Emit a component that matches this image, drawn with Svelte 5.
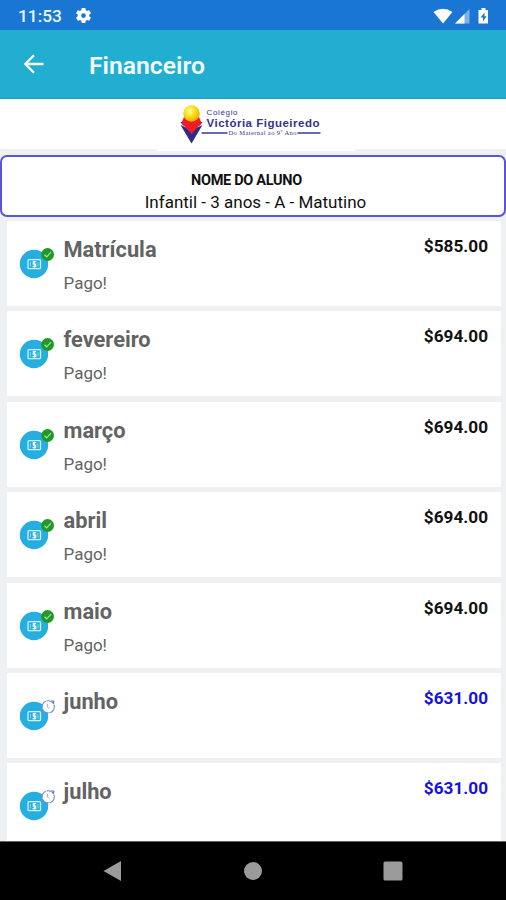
<script lang="ts">
  type Parcela = {
    mes: string;
    valor: string;
    pago: boolean;
  };

  let parcelas: Parcela[] = [
    { mes: "Matrícula", valor: "$585.00", pago: true },
    { mes: "fevereiro", valor: "$694.00", pago: true },
    { mes: "março", valor: "$694.00", pago: true },
    { mes: "abril", valor: "$694.00", pago: true },
    { mes: "maio", valor: "$694.00", pago: true },
    { mes: "junho", valor: "$631.00", pago: false },
    { mes: "julho", valor: "$631.00", pago: false },
  ];
</script>

<div class="screen">
  <div class="statusbar">
    <span class="time">11:53</span>
    <svg class="gear" viewBox="0 0 24 24" width="19" height="19">
      <path
        fill="#fff"
        d="M19.14 12.94c.04-.3.06-.61.06-.94 0-.32-.02-.64-.07-.94l2.03-1.58c.18-.14.23-.41.12-.61l-1.92-3.32c-.12-.22-.37-.29-.59-.22l-2.39.96c-.5-.38-1.03-.7-1.62-.94l-.36-2.54c-.04-.24-.24-.41-.48-.41h-3.84c-.24 0-.43.17-.47.41l-.36 2.54c-.59.24-1.13.57-1.62.94l-2.39-.96c-.22-.08-.47 0-.59.22L2.74 8.87c-.12.21-.08.47.12.61l2.03 1.58c-.05.3-.09.63-.09.94s.02.64.07.94l-2.03 1.58c-.18.14-.23.41-.12.61l1.92 3.32c.12.22.37.29.59.22l2.39-.96c.5.38 1.03.7 1.62.94l.36 2.54c.05.24.24.41.48.41h3.84c.24 0 .44-.17.47-.41l.36-2.54c.59-.24 1.13-.56 1.62-.94l2.39.96c.22.08.47 0 .59-.22l1.92-3.32c.12-.22.07-.47-.12-.61l-2.01-1.58zM12 15a3 3 0 1 1 0-6 3 3 0 0 1 0 6z"
      />
    </svg>
    <svg class="signals" viewBox="0 0 58 18" width="58" height="18">
      <path fill="#fff" d="M0.500 5 Q10 -1.500 19.500 5 L10 16.500 Z" />
      <path fill="#7fb0e6" d="M22 16.500 L36.500 2 V16.500 Z" />
      <path fill="#fff" d="M22 16.500 L31.500 7 V16.500 Z" />
      <path fill="#fff" d="M48.500 1 h4 v2 h2.500 v13.500 h-9.500 V3 h3 z" />
      <path fill="#1976d2" d="M51.500 5.500 L47.500 10.500 H50 V14.500 L53.500 9.300 H51.500 Z" />
    </svg>
  </div>

  <header>
    <svg class="back" viewBox="0 0 20 20" width="20" height="20">
      <path
        d="M19.500 10 H1.500 M10 1.200 L1.300 10 L10 18.800"
        fill="none"
        stroke="#fff"
        stroke-width="2.300"
      />
    </svg>
    <h1>Financeiro</h1>
  </header>

  <div class="logo">
    <svg viewBox="0 0 198 46" width="198" height="46">
      <defs>
        <radialGradient id="sol" cx="0.4" cy="0.35" r="0.65">
          <stop offset="0" stop-color="#fffbb0" />
          <stop offset="0.45" stop-color="#fde51a" />
          <stop offset="1" stop-color="#f0a800" />
        </radialGradient>
      </defs>
      <g transform="translate(20.500 0)">
        <path fill="#2d2c86" d="M3 20 L14 25 L25 20 L14 38.500 Z" />
        <path fill="#2d2c86" d="M3 17 h5 l-2 4 z M25 17 h-5 l2 4 z" />
        <path fill="#ee1c25" d="M6.500 12 L21.500 12 L24 18 L14 29 L4 18 Z" />
        <circle cx="14" cy="8.500" r="8.300" fill="url(#sol)" />
        <text class="colegio" x="29" y="9.500" textLength="31">Colégio</text>
        <text class="victoria" x="29" y="22" textLength="113">Victória Figueiredo</text>
        <path stroke="#3a3990" stroke-width="1.300" d="M24 28 H50 M120 28 H143" />
        <text class="maternal" x="51" y="30.300" textLength="68">Do Maternal ao 9º Ano</text>
      </g>
    </svg>
  </div>

  <div class="aluno">
    <b>NOME DO ALUNO</b>
    <span>Infantil - 3 anos - A - Matutino</span>
  </div>

  <main>
    {#each parcelas as parcela}
      <div class="card">
        <svg class="icone" viewBox="0 0 36 32" width="36" height="32">
          <circle cx="15" cy="17" r="14.200" fill="#27aee0" />
          <rect
            x="9"
            y="12.700"
            width="12.500"
            height="9"
            rx="1"
            fill="none"
            stroke="#d4effa"
            stroke-width="1.300"
          />
          <path
            d="M17.200 14.700 H14.300 V17.100 H16.700 V19.700 H13.500 M15.400 13.700 V20.700"
            fill="none"
            stroke="#e6f7fd"
            stroke-width="1.200"
          />
          <path d="M11.500 15 V19.500 M19 15 V19.500" stroke="#8fd6f0" stroke-width="0.900" />
          {#if parcela.pago}
            <circle cx="28.600" cy="7.500" r="6.400" fill="#1f9a24" />
            <path
              d="M25.500 7.700 L27.700 9.800 L32 5.200"
              fill="none"
              stroke="#a9dcab"
              stroke-width="1.200"
            />
          {:else}
            <circle
              cx="29.200"
              cy="7.800"
              r="6.100"
              fill="#fff"
              stroke="#7186d8"
              stroke-width="1.100"
              stroke-dasharray="8 0.800"
            />
            <path
              d="M32.500 1.800 L35 2.200 L34.300 4.600"
              fill="none"
              stroke="#4961d2"
              stroke-width="1"
            />
            <path
              d="M28.500 4.800 V8.300 L30.300 9.200"
              fill="none"
              stroke="#a9acc9"
              stroke-width="0.900"
            />
          {/if}
        </svg>
        <div class="texto">
          <h2>{parcela.mes}</h2>
          {#if parcela.pago}
            <p>Pago!</p>
          {/if}
        </div>
        <div class="valor" class:aberto={!parcela.pago}>{parcela.valor}</div>
      </div>
    {/each}
  </main>

  <footer>
    <svg viewBox="0 0 20 22" width="20" height="22">
      <path fill="#9b9b9b" d="M0.500 11 L18 1 V21 Z" />
    </svg>
    <svg viewBox="0 0 20 20" width="20" height="20">
      <circle cx="10" cy="10" r="9" fill="#9b9b9b" />
    </svg>
    <svg viewBox="0 0 20 20" width="20" height="20">
      <rect x="0.500" y="0.500" width="19" height="19" rx="1.500" fill="#9b9b9b" />
    </svg>
  </footer>
</div>

<style>
  :global(body) {
    margin: 0;
  }
  .screen {
    width: 506px;
    height: 900px;
    display: flex;
    flex-direction: column;
    overflow: hidden;
    background-color: #eef0f1;
    font-family: Roboto, sans-serif;
  }
  h1,
  h2,
  p {
    margin: 0;
  }

  /* status bar */
  .statusbar {
    height: 30px;
    flex: none;
    display: flex;
    align-items: center;
    box-sizing: border-box;
    padding: 1px 15px 0 18px;
    background-color: #1976d2;
  }
  .time {
    width: 56px;
    color: #eef6ff;
    font-size: 17.3px;
    font-weight: 500;
    line-height: 30px;
  }
  .signals {
    margin-left: auto;
  }

  /* header */
  header {
    height: 69px;
    flex: none;
    display: flex;
    align-items: center;
    box-sizing: border-box;
    padding: 2px 0 0 24px;
    background-color: #21aed1;
    border-bottom: 1px solid #1aa2c6;
  }
  .back {
    margin-top: -3px;
  }
  h1 {
    margin-left: 45px;
    color: #f2fcff;
    font-size: 24.7px;
    font-weight: 600;
  }

  /* logo */
  .logo {
    height: 50px;
    flex: none;
    display: flex;
    justify-content: center;
    box-sizing: border-box;
    padding: 6px 0 0 6px;
    background-color: #fff;
  }
  .logo svg {
    flex: none;
    background-color: #fff;
  }
  .logo text {
    fill: #35348c;
    font-family: "Liberation Sans", Arial, sans-serif;
  }
  .logo .colegio {
    font-size: 8px;
  }
  .logo .victoria {
    font-size: 11.5px;
    font-weight: 700;
  }
  .logo .maternal {
    font-family: "Liberation Serif", serif;
    font-size: 6.5px;
  }

  /* aluno */
  .aluno {
    height: 62px;
    flex: none;
    display: flex;
    flex-direction: column;
    align-items: center;
    box-sizing: border-box;
    margin-top: 6px;
    padding-top: 13px;
    background-color: #fff;
    border: 2px solid #5a54d6;
    border-radius: 7px;
    color: #111;
    line-height: 21.5px;
  }
  .aluno b {
    margin-right: 13px;
    font-size: 14.5px;
    letter-spacing: -0.3px;
  }
  .aluno span {
    margin-left: 5px;
    font-size: 17px;
  }

  /* parcelas */
  main {
    flex: 1;
    min-height: 0;
    display: flex;
    flex-direction: column;
    gap: 5.4px;
    overflow: hidden;
    padding: 4px 5px 0 7px;
  }
  .card {
    height: 85px;
    flex: none;
    display: flex;
    box-sizing: border-box;
    padding: 14px 13px 0 12px;
    background-color: #fff;
  }
  .icone {
    margin-top: 12px;
  }
  .texto {
    flex: 1;
    margin-left: 8.5px;
    color: #636363;
  }
  h2 {
    margin-top: 1px;
    font-size: 21.8px;
    font-weight: 700;
    line-height: 28px;
  }
  p {
    margin-top: 7px;
    font-size: 17px;
    line-height: 24px;
  }
  .valor {
    color: #111;
    font-size: 17.2px;
    font-weight: 700;
    line-height: 22px;
  }
  .aberto {
    color: #1512dc;
  }

  /* footer */
  footer {
    height: 59px;
    flex: none;
    display: flex;
    justify-content: space-between;
    align-items: center;
    box-sizing: border-box;
    padding: 0 103px;
    background-color: #000;
    border-top: 1px solid #666;
  }
</style>
